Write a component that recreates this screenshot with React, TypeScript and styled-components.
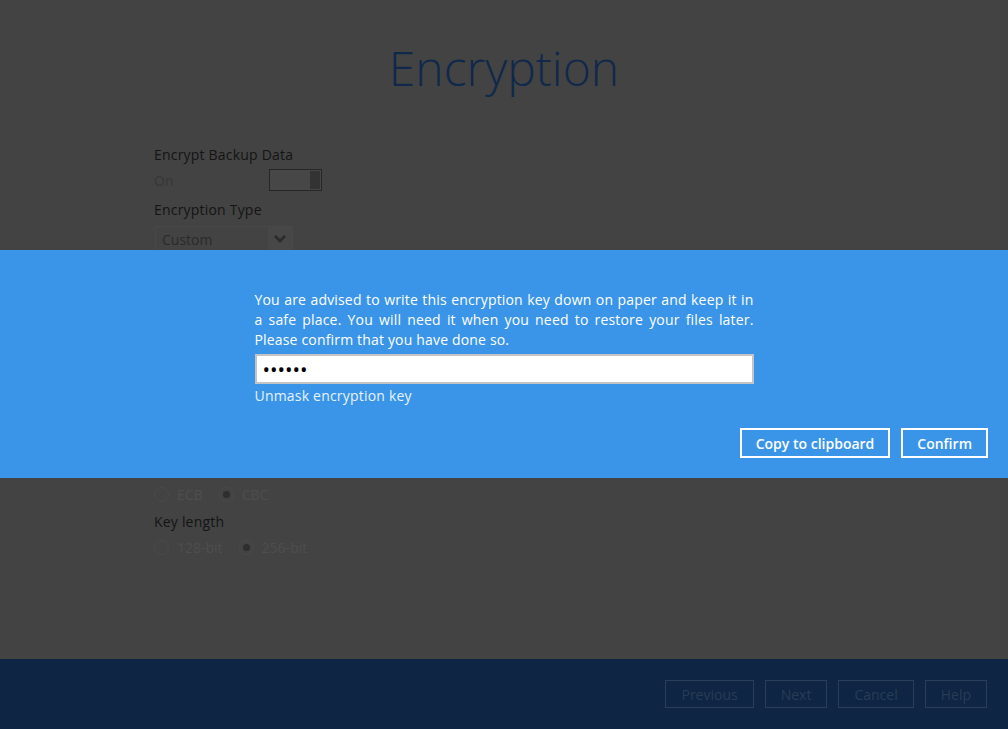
import React from "react";
import styled, { createGlobalStyle } from "styled-components";

const Global = createGlobalStyle`
  html, body { margin: 0; padding: 0; }
  body { font-family: "Open Sans", "Liberation Sans", sans-serif; background: #434343; }
  * { box-sizing: border-box; }
`;

const Page = styled.div`
  position: relative;
  width: 1008px;
  height: 729px;
  display: flex;
  flex-direction: column;
  overflow: hidden;
`;

const Main = styled.div`
  flex: 1;
  background: #434343;
  display: flex;
  flex-direction: column;
`;

const Title = styled.h1`
  margin: 35px 0 0;
  font-size: 48px;
  line-height: 65px;
  font-weight: 300;
  text-align: center;
  color: #10284a;
`;

const Form = styled.div`
  margin: 45px 0 0 154px;
  display: flex;
  flex-direction: column;
  align-items: flex-start;
`;

const Label = styled.div<{ $mt?: number }>`
  margin-top: ${(p) => p.$mt ?? 0}px;
  font-size: 14px;
  line-height: 20px;
  letter-spacing: 0.2px;
  color: #141414;
`;

const SwitchRow = styled.div`
  margin-top: 3px;
  height: 24px;
  width: 168px;
  display: flex;
  align-items: center;
  justify-content: space-between;
  font-size: 14px;
  color: #363636;
`;

const Switch = styled.div`
  width: 53px;
  height: 22px;
  border: 1px solid #262626;
  background: #474747;
  display: flex;
  justify-content: flex-end;
  padding: 1px;
`;

const Knob = styled.div`
  width: 10px;
  background: #333333;
`;

const Select = styled.div`
  margin-top: 6px;
  margin-left: 1px;
  width: 138px;
  height: 26px;
  border: 1px solid #484848;
  display: flex;
  align-items: center;
  justify-content: space-between;
  font-size: 14px;
  color: #2a2a2a;
  padding-left: 6px;
`;

const Chevron = styled.div`
  width: 24px;
  height: 100%;
  background: #474747;
  display: flex;
  align-items: center;
  justify-content: center;
`;

const RadioRow = styled.div<{ $mt?: number }>`
  margin-top: ${(p) => p.$mt ?? 4}px;
  height: 20px;
  display: flex;
  align-items: center;
  gap: 8px;
`;

const RadioItem = styled.div`
  display: flex;
  align-items: center;
  gap: 8px;
  margin-right: 8px;
  font-size: 14px;
  color: #4e4e4e;
`;

const Circle = styled.span<{ $on?: boolean }>`
  width: 15px;
  height: 15px;
  border-radius: 50%;
  border: 1px solid #4a4a4a;
  display: flex;
  align-items: center;
  justify-content: center;
  &::after {
    content: "";
    width: 7px;
    height: 7px;
    border-radius: 50%;
    background: ${(p) => (p.$on ? "#2e2e2e" : "transparent")};
  }
`;

const HiddenInput = styled.div`
  margin-top: 4px;
  width: 300px;
  height: 26px;
  border: 1px solid #484848;
`;

const Band = styled.div`
  position: absolute;
  left: 0;
  right: 0;
  top: 250px;
  height: 228px;
  background: #3a95e9;
  padding: 40px 20px 0;
  display: flex;
  flex-direction: column;
`;

const BandContent = styled.div`
  width: 499px;
  margin: 0 auto;
  display: flex;
  flex-direction: column;
`;

const Message = styled.p`
  margin: 0;
  font-size: 14px;
  line-height: 20px;
  letter-spacing: 0.17px;
  color: #ffffff;
  text-align: justify;
`;

const KeyInput = styled.input`
  margin-top: 4px;
  height: 30px;
  width: 100%;
  border: 2px solid #c4c4c4;
  background: #ffffff;
  padding: 0 6px;
  font-family: "Open Sans", sans-serif;
  font-size: 20px;
  letter-spacing: 0;
  color: #000;
  outline: none;
`;

const Unmask = styled.div`
  margin-top: 2px;
  font-size: 14px;
  line-height: 20px;
  letter-spacing: 0.2px;
  color: #e8f2fc;
`;

const ButtonRow = styled.div`
  margin-top: 22px;
  display: flex;
  justify-content: flex-end;
  gap: 11px;
`;

const BandButton = styled.button`
  height: 30px;
  padding: 0 14px;
  border: 2px solid #ffffff;
  background: transparent;
  color: #ffffff;
  font-family: "Open Sans", sans-serif;
  font-size: 14px;
  font-weight: 600;
`;

const Footer = styled.div`
  height: 70px;
  background: #0e2643;
  display: flex;
  justify-content: flex-end;
  align-items: flex-start;
  gap: 11px;
  padding: 21px 21px 0 0;
`;

const FooterButton = styled.button`
  height: 28px;
  padding: 0 15px;
  border: 1px solid #2a3e58;
  background: transparent;
  color: #283c56;
  font-family: "Open Sans", sans-serif;
  font-size: 14px;
`;

const Radio = ({ label, on }: { label: string; on?: boolean }) => (
  <RadioItem>
    <Circle $on={on} />
    {label}
  </RadioItem>
);

export default function App() {
  return (
    <Page>
      <Global />
      <Main>
        <Title>Encryption</Title>
        <Form>
          <Label>Encrypt Backup Data</Label>
          <SwitchRow>
            <span>On</span>
            <Switch>
              <Knob />
            </Switch>
          </SwitchRow>
          <Label $mt={8}>Encryption Type</Label>
          <Select>
            Custom
            <Chevron>
              <svg width="12" height="8" viewBox="0 0 12 8">
                <path d="M1 1l5 5 5-5" fill="none" stroke="#2a2a2a" strokeWidth="2.5" />
              </svg>
            </Chevron>
          </Select>
          <Label $mt={12}>Algorithm</Label>
          <RadioRow>
            <Radio label="AES" on />
            <Radio label="Twofish" />
            <Radio label="Triple DES" />
          </RadioRow>
          <Label $mt={12}>Encryption key</Label>
          <HiddenInput />
          <Label $mt={12}>Re-enter encryption key</Label>
          <HiddenInput />
          <Label $mt={28}>Method</Label>
          <RadioRow>
            <Radio label="ECB" />
            <Radio label="CBC" on />
          </RadioRow>
          <Label $mt={8}>Key length</Label>
          <RadioRow $mt={5}>
            <Radio label="128-bit" />
            <Radio label="256-bit" on />
          </RadioRow>
        </Form>
      </Main>
      <Footer>
        <FooterButton>Previous</FooterButton>
        <FooterButton>Next</FooterButton>
        <FooterButton>Cancel</FooterButton>
        <FooterButton>Help</FooterButton>
      </Footer>
      <Band>
        <BandContent>
          <Message>
            You are advised to write this encryption key down on paper and keep it in a safe place. You will
            need it when you need to restore your files later. Please confirm that you have done so.
          </Message>
          <KeyInput type="password" value="abcdef" readOnly />
          <Unmask>Unmask encryption key</Unmask>
        </BandContent>
        <ButtonRow>
          <BandButton>Copy to clipboard</BandButton>
          <BandButton>Confirm</BandButton>
        </ButtonRow>
      </Band>
    </Page>
  );
}
